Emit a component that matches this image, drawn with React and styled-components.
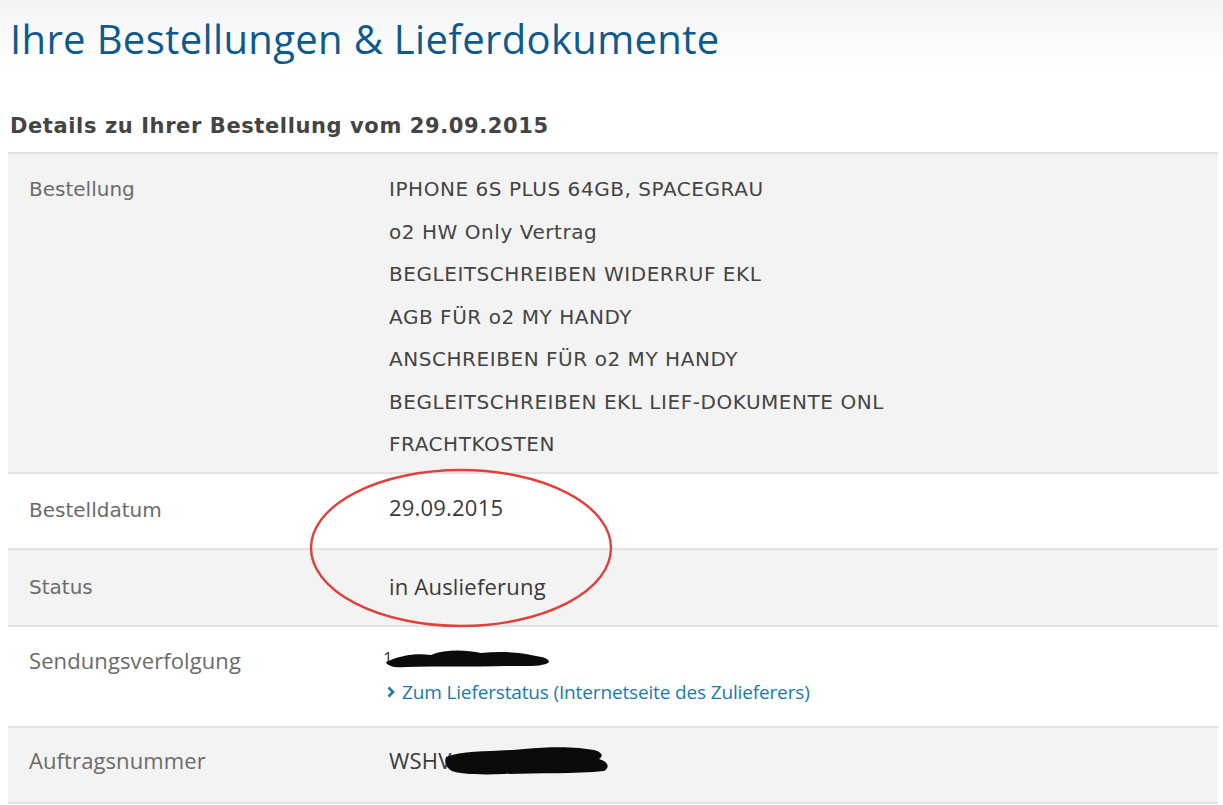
import React from 'react';
import styled, { createGlobalStyle } from 'styled-components';

const GlobalStyle = createGlobalStyle`
  html, body {
    margin: 0;
    padding: 0;
  }
  body {
    background: linear-gradient(#f3f4f6 0px, #ffffff 68px) no-repeat;
    background-color: #fff;
    font-family: "DejaVu Sans", Verdana, sans-serif;
    color: #444;
  }
`;

const Page = styled.div`
  padding: 0 5px 0 8px;
  width: 1210px;
`;

const Title = styled.h1`
  margin: 0;
  padding: 13px 0 0 2px;
  height: 84px;
  box-sizing: border-box;
  font-family: "Open Sans", sans-serif;
  font-weight: 400;
  font-size: 40px;
  letter-spacing: 0.35px;
  color: #0e5a8e;
  line-height: 52px;
`;

const Subtitle = styled.h2`
  margin: 0;
  padding: 29px 0 0 2px;
  height: 68px;
  box-sizing: border-box;
  font-family: "DejaVu Sans", Verdana, sans-serif;
  font-weight: 700;
  font-size: 21px;
  letter-spacing: 0.6px;
  color: #444;
  line-height: 26px;
`;

const Table = styled.div`
  position: relative;
  border-top: 2px solid #e2e2e2;
`;

const Row = styled.div`
  display: grid;
  grid-template-columns: 381px 1fr;
  min-height: ${p => p.$height}px;
  background: ${p => (p.$shaded ? '#f3f3f3' : '#ffffff')};
  border-bottom: 2px solid #e2e2e2;
  box-sizing: border-box;
  align-items: ${p => (p.$top ? 'start' : 'center')};
  padding: ${p => p.$pad || '0'};
`;

const Label = styled.div`
  padding-left: 21px;
  font-family: ${p => (p.$narrow ? '"Open Sans", sans-serif' : '"DejaVu Sans", Verdana, sans-serif')};
  font-size: ${p => (p.$narrow ? '22px' : '20px')};
  letter-spacing: ${p => (p.$narrow ? '0.1px' : '0')};
  color: #6b6b6b;
  line-height: ${p => (p.$narrow ? '34px' : '42px')};
`;

const Values = styled.div`
  display: flex;
  flex-direction: column;
`;

const Item = styled.div`
  font-family: "DejaVu Sans", Verdana, sans-serif;
  font-size: 20px;
  letter-spacing: 0.55px;
  line-height: 42.5px;
  color: #444;
  white-space: nowrap;
`;

const Value = styled.div`
  font-family: "Open Sans", sans-serif;
  font-size: 22px;
  letter-spacing: 0.2px;
  line-height: 34px;
  color: #3a3a3a;
  white-space: nowrap;
  display: flex;
  align-items: center;
  margin: ${p => p.$shift || '0'};
`;

const Redacted = styled.svg`
  display: block;
  flex: none;
`;

const Link = styled.a`
  display: flex;
  align-items: center;
  gap: 7px;
  font-family: "Open Sans", sans-serif;
  font-size: 19px;
  letter-spacing: -0.15px;
  line-height: 34px;
  color: #1a7ab0;
  text-decoration: none;
  margin-left: -2px;
`;

const Overlay = styled.svg`
  position: absolute;
  left: 292px;
  top: 312px;
  pointer-events: none;
`;

const items = [
  'IPHONE 6S PLUS 64GB, SPACEGRAU',
  'o2 HW Only Vertrag',
  'BEGLEITSCHREIBEN WIDERRUF EKL',
  'AGB FÜR o2 MY HANDY',
  'ANSCHREIBEN FÜR o2 MY HANDY',
  'BEGLEITSCHREIBEN EKL LIEF-DOKUMENTE ONL',
  'FRACHTKOSTEN',
];

export default function App() {
  return (
    <>
      <GlobalStyle />
      <Page>
        <Title>Ihre Bestellungen &amp; Lieferdokumente</Title>
        <Subtitle>Details zu Ihrer Bestellung vom 29.09.2015</Subtitle>
        <Table>
          <Row $shaded $top $height={319} $pad="14px 0 6px 0">
            <Label>Bestellung</Label>
            <Values>
              {items.map(t => (
                <Item key={t}>{t}</Item>
              ))}
            </Values>
          </Row>
          <Row $height={76} $pad="0 0 2px 0">
            <Label>Bestelldatum</Label>
            <Value $shift="-5px 0 0 0">29.09.2015</Value>
          </Row>
          <Row $shaded $height={77}>
            <Label>Status</Label>
            <Value $shift="-3px 0 0 0">in Auslieferung</Value>
          </Row>
          <Row $top $height={101} $pad="16px 0 0 0">
            <Label $narrow>Sendungsverfolgung</Label>
            <Values>
              <Value $shift="-2px 0 0 -6px">
                <span style={{ fontSize: 17 }}>1</span>
                <Redacted width="165" height="22" viewBox="0 0 165 22" style={{ marginLeft: -7 }}>
                  <path
                    d="M0 15 C15 8 30 6 45 8 C60 2 80 3 95 6 C115 4 135 5 150 9 C158 10 163 12 163 15 C158 20 140 19 120 19 C90 20 50 19 20 20 C8 21 1 19 0 15 Z"
                    fill="#0b0b0b"
                  />
                </Redacted>
              </Value>
              <Link href="#">
                <svg width="8" height="12" viewBox="0 0 8 12">
                  <polyline points="1.5,1.5 6,6 1.5,10.5" fill="none" stroke="#1a7ab0" strokeWidth="2.6" />
                </svg>
                Zum Lieferstatus (Internetseite des Zulieferers)
              </Link>
            </Values>
          </Row>
          <Row $shaded $height={76} $pad="0 0 9px 0">
            <Label $narrow>Auftragsnummer</Label>
            <Value>
              WSHV
              <Redacted width="168" height="32" viewBox="0 0 168 32" style={{ marginLeft: -8 }}>
                <path
                  d="M2 13 C20 6 50 8 80 5 C110 2 135 3 150 6 C158 8 160 12 155 15 C163 17 167 23 160 27 C130 30 90 29 60 30 C35 31 15 30 8 27 C2 24 0 18 2 13 Z"
                  fill="#0a0a0a"
                />
              </Redacted>
            </Value>
          </Row>
          <Overlay width="320" height="165" viewBox="0 0 320 165">
            <ellipse cx="161" cy="82" rx="150" ry="78" fill="none" stroke="#e2403a" strokeWidth="2.4" />
          </Overlay>
        </Table>
      </Page>
    </>
  );
}
